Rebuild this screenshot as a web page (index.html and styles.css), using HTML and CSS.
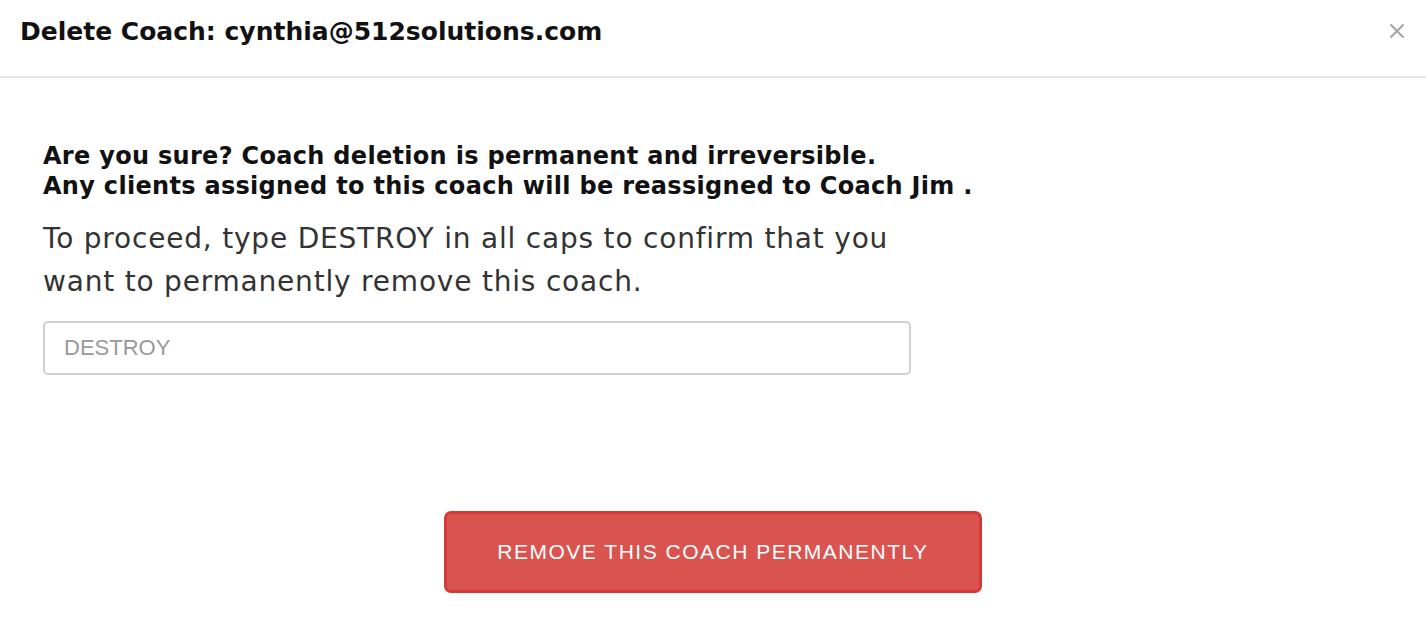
FILE: index.html
```html
<!DOCTYPE html>
<html>
<head>
<meta charset="utf-8">
<link rel="stylesheet" href="styles.css">
</head>
<body>
<div class="modal">
  <div class="modal-header">
    <h4 class="modal-title">Delete Coach: cynthia@512solutions.com</h4>
    <button class="close" type="button" aria-label="Close">
      <svg width="16" height="16" viewBox="0 0 16 16"><path d="M1.5 1.5 L14.5 14.5 M14.5 1.5 L1.5 14.5" stroke="#a3a3a3" stroke-width="2" fill="none"/></svg>
    </button>
  </div>
  <div class="modal-body">
    <p class="warning">Are you sure? Coach deletion is permanent and irreversible.<br>Any clients assigned to this coach will be reassigned to Coach Jim .</p>
    <p class="instructions">To proceed, type DESTROY in all caps to confirm that you want to permanently remove this coach.</p>
    <input class="confirm-input" type="text" placeholder="DESTROY">
  </div>
  <div class="modal-footer">
    <button class="btn-danger" type="button">REMOVE THIS COACH PERMANENTLY</button>
  </div>
</div>
</body>
</html>
```

FILE: styles.css
```css
html, body {
  margin: 0;
  padding: 0;
  background: #fff;
}
body {
  font-family: "DejaVu Sans", "Open Sans", sans-serif;
  color: #111;
}
.modal {
  width: 1426px;
  height: 640px;
  display: flex;
  flex-direction: column;
}
.modal-header {
  height: 78px;
  box-sizing: border-box;
  border-bottom: 2px solid #e5e5e5;
  display: flex;
  align-items: center;
  justify-content: space-between;
  padding: 0 20px 14px 20px;
}
.modal-title {
  margin: 0;
  font-size: 25px;
  font-weight: 700;
  color: #111;
}
.close {
  border: 0;
  background: none;
  padding: 0;
  margin-right: 1px;
  display: flex;
}
.modal-body {
  padding: 63px 0 0 43px;
}
.warning {
  margin: 0;
  font-size: 24px;
  font-weight: 700;
  letter-spacing: 0.3px;
  line-height: 30px;
  color: #111;
}
.instructions {
  margin: 16px 0 0 0;
  width: 900px;
  font-size: 28px;
  font-weight: 400;
  letter-spacing: 0.8px;
  line-height: 43px;
  color: #333;
}
.confirm-input {
  display: block;
  margin-top: 18px;
  width: 868px;
  height: 54px;
  box-sizing: border-box;
  border: 2px solid #d0d0d0;
  border-radius: 5px;
  padding: 0 19px;
  font-family: "Liberation Sans", Arial, sans-serif;
  font-size: 22px;
  outline: none;
}
.confirm-input::placeholder {
  color: #999;
}
.modal-footer {
  display: flex;
  justify-content: center;
  padding-top: 136px;
}
.btn-danger {
  width: 538px;
  height: 82px;
  background: #d9534f;
  border: 3px solid #d43a36;
  border-radius: 7px;
  color: #fff;
  font-family: "Liberation Sans", Arial, sans-serif;
  font-size: 21px;
  letter-spacing: 1.5px;
  cursor: pointer;
}
```
